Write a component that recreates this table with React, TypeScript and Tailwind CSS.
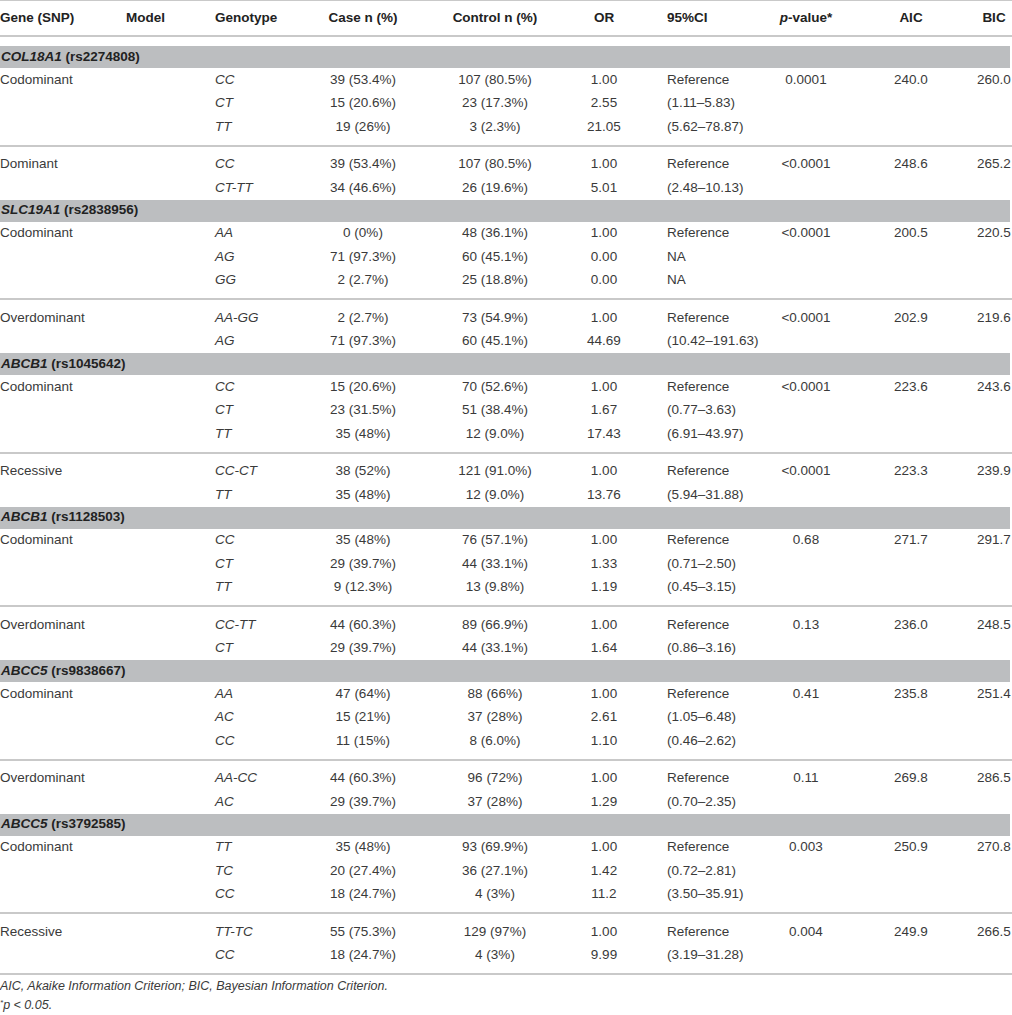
import React from "react";

type Row = {
  geno: string;
  caseN: string;
  ctrlN: string;
  or: string;
  ci: string;
  p?: string;
  aic?: string;
  bic?: string;
};

type Group = { model: string; rows: Row[] };
type Section = { gene: string; snp: string; groups: Group[] };

const sections: Section[] = [
  {
    gene: "COL18A1",
    snp: "(rs2274808)",
    groups: [
      {
        model: "Codominant",
        rows: [
          { geno: "CC", caseN: "39 (53.4%)", ctrlN: "107 (80.5%)", or: "1.00", ci: "Reference", p: "0.0001", aic: "240.0", bic: "260.0" },
          { geno: "CT", caseN: "15 (20.6%)", ctrlN: "23 (17.3%)", or: "2.55", ci: "(1.11–5.83)" },
          { geno: "TT", caseN: "19 (26%)", ctrlN: "3 (2.3%)", or: "21.05", ci: "(5.62–78.87)" },
        ],
      },
      {
        model: "Dominant",
        rows: [
          { geno: "CC", caseN: "39 (53.4%)", ctrlN: "107 (80.5%)", or: "1.00", ci: "Reference", p: "<0.0001", aic: "248.6", bic: "265.2" },
          { geno: "CT-TT", caseN: "34 (46.6%)", ctrlN: "26 (19.6%)", or: "5.01", ci: "(2.48–10.13)" },
        ],
      },
    ],
  },
  {
    gene: "SLC19A1",
    snp: "(rs2838956)",
    groups: [
      {
        model: "Codominant",
        rows: [
          { geno: "AA", caseN: "0 (0%)", ctrlN: "48 (36.1%)", or: "1.00", ci: "Reference", p: "<0.0001", aic: "200.5", bic: "220.5" },
          { geno: "AG", caseN: "71 (97.3%)", ctrlN: "60 (45.1%)", or: "0.00", ci: "NA" },
          { geno: "GG", caseN: "2 (2.7%)", ctrlN: "25 (18.8%)", or: "0.00", ci: "NA" },
        ],
      },
      {
        model: "Overdominant",
        rows: [
          { geno: "AA-GG", caseN: "2 (2.7%)", ctrlN: "73 (54.9%)", or: "1.00", ci: "Reference", p: "<0.0001", aic: "202.9", bic: "219.6" },
          { geno: "AG", caseN: "71 (97.3%)", ctrlN: "60 (45.1%)", or: "44.69", ci: "(10.42–191.63)" },
        ],
      },
    ],
  },
  {
    gene: "ABCB1",
    snp: "(rs1045642)",
    groups: [
      {
        model: "Codominant",
        rows: [
          { geno: "CC", caseN: "15 (20.6%)", ctrlN: "70 (52.6%)", or: "1.00", ci: "Reference", p: "<0.0001", aic: "223.6", bic: "243.6" },
          { geno: "CT", caseN: "23 (31.5%)", ctrlN: "51 (38.4%)", or: "1.67", ci: "(0.77–3.63)" },
          { geno: "TT", caseN: "35 (48%)", ctrlN: "12 (9.0%)", or: "17.43", ci: "(6.91–43.97)" },
        ],
      },
      {
        model: "Recessive",
        rows: [
          { geno: "CC-CT", caseN: "38 (52%)", ctrlN: "121 (91.0%)", or: "1.00", ci: "Reference", p: "<0.0001", aic: "223.3", bic: "239.9" },
          { geno: "TT", caseN: "35 (48%)", ctrlN: "12 (9.0%)", or: "13.76", ci: "(5.94–31.88)" },
        ],
      },
    ],
  },
  {
    gene: "ABCB1",
    snp: "(rs1128503)",
    groups: [
      {
        model: "Codominant",
        rows: [
          { geno: "CC", caseN: "35 (48%)", ctrlN: "76 (57.1%)", or: "1.00", ci: "Reference", p: "0.68", aic: "271.7", bic: "291.7" },
          { geno: "CT", caseN: "29 (39.7%)", ctrlN: "44 (33.1%)", or: "1.33", ci: "(0.71–2.50)" },
          { geno: "TT", caseN: "9 (12.3%)", ctrlN: "13 (9.8%)", or: "1.19", ci: "(0.45–3.15)" },
        ],
      },
      {
        model: "Overdominant",
        rows: [
          { geno: "CC-TT", caseN: "44 (60.3%)", ctrlN: "89 (66.9%)", or: "1.00", ci: "Reference", p: "0.13", aic: "236.0", bic: "248.5" },
          { geno: "CT", caseN: "29 (39.7%)", ctrlN: "44 (33.1%)", or: "1.64", ci: "(0.86–3.16)" },
        ],
      },
    ],
  },
  {
    gene: "ABCC5",
    snp: "(rs9838667)",
    groups: [
      {
        model: "Codominant",
        rows: [
          { geno: "AA", caseN: "47 (64%)", ctrlN: "88 (66%)", or: "1.00", ci: "Reference", p: "0.41", aic: "235.8", bic: "251.4" },
          { geno: "AC", caseN: "15 (21%)", ctrlN: "37 (28%)", or: "2.61", ci: "(1.05–6.48)" },
          { geno: "CC", caseN: "11 (15%)", ctrlN: "8 (6.0%)", or: "1.10", ci: "(0.46–2.62)" },
        ],
      },
      {
        model: "Overdominant",
        rows: [
          { geno: "AA-CC", caseN: "44 (60.3%)", ctrlN: "96 (72%)", or: "1.00", ci: "Reference", p: "0.11", aic: "269.8", bic: "286.5" },
          { geno: "AC", caseN: "29 (39.7%)", ctrlN: "37 (28%)", or: "1.29", ci: "(0.70–2.35)" },
        ],
      },
    ],
  },
  {
    gene: "ABCC5",
    snp: "(rs3792585)",
    groups: [
      {
        model: "Codominant",
        rows: [
          { geno: "TT", caseN: "35 (48%)", ctrlN: "93 (69.9%)", or: "1.00", ci: "Reference", p: "0.003", aic: "250.9", bic: "270.8" },
          { geno: "TC", caseN: "20 (27.4%)", ctrlN: "36 (27.1%)", or: "1.42", ci: "(0.72–2.81)" },
          { geno: "CC", caseN: "18 (24.7%)", ctrlN: "4 (3%)", or: "11.2", ci: "(3.50–35.91)" },
        ],
      },
      {
        model: "Recessive",
        rows: [
          { geno: "TT-TC", caseN: "55 (75.3%)", ctrlN: "129 (97%)", or: "1.00", ci: "Reference", p: "0.004", aic: "249.9", bic: "266.5" },
          { geno: "CC", caseN: "18 (24.7%)", ctrlN: "4 (3%)", or: "9.99", ci: "(3.19–31.28)" },
        ],
      },
    ],
  },
];

function DataRow({ model, row }: { model?: string; row: Row }) {
  return (
    <div className="flex h-[23.5px] items-center whitespace-nowrap">
      <div className="w-[215px]">{model}</div>
      <div className="w-[103px] italic">{row.geno}</div>
      <div className="w-[90px] text-center">{row.caseN}</div>
      <div className="w-[174px] text-center">{row.ctrlN}</div>
      <div className="w-[44px] text-center">{row.or}</div>
      <div className="w-[140px] pl-[41px]">{row.ci}</div>
      <div className="w-[80px] text-center">{row.p}</div>
      <div className="w-[130px] text-center">{row.aic}</div>
      <div className="w-[36px] text-center">{row.bic}</div>
    </div>
  );
}

export default function App() {
  return (
    <div
      className="w-[1012px] h-[1015px] overflow-hidden bg-white text-[13.5px] text-[#3a3a3a]"
      style={{ fontFamily: '"Liberation Sans", Arial, sans-serif' }}
    >
      {/* Header */}
      <div className="border-t border-[#c9c9c9]">
        <div className="flex h-[34px] items-center whitespace-nowrap font-bold text-[#222]">
          <div className="w-[126px]">Gene (SNP)</div>
          <div className="w-[89px]">Model</div>
          <div className="w-[103px]">Genotype</div>
          <div className="w-[90px] text-center">Case n (%)</div>
          <div className="w-[174px] text-center">Control n (%)</div>
          <div className="w-[44px] text-center">OR</div>
          <div className="w-[140px] pl-[41px]">95%CI</div>
          <div className="w-[80px] text-center">
            <span className="italic">p</span>-value*
          </div>
          <div className="w-[130px] text-center">AIC</div>
          <div className="w-[36px] text-center">BIC</div>
        </div>
        <div className="h-[2px] bg-[#c9c9c9]" />
      </div>

      <div className="mt-[9px]">
        {sections.map((s, si) => (
          <div key={si}>
            <div className="flex h-[22px] w-[1010px] items-center bg-[#bcbec0] pl-[1px] font-bold text-[#222]">
              <span className="italic">{s.gene}</span>&nbsp;{s.snp}
            </div>
            {s.groups.map((g, gi) => {
              const last = gi === s.groups.length - 1;
              const isEnd = si === sections.length - 1 && last;
              return (
                <div key={gi} className={gi > 0 ? "pt-[6px]" : ""}>
                  {g.rows.map((r, ri) => (
                    <DataRow key={ri} model={ri === 0 ? g.model : undefined} row={r} />
                  ))}
                  {!last && <div className="mt-[6px] h-[2px] bg-[#c9c9c9]" />}
                  {isEnd && <div className="mt-[6px] h-[2px] bg-[#c9c9c9]" />}
                </div>
              );
            })}
          </div>
        ))}
      </div>

      {/* Footnotes */}
      <div className="pt-[2px] text-[12.5px] italic leading-[19px] text-[#3a3a3a]">
        <div>AIC, Akaike Information Criterion; BIC, Bayesian Information Criterion.</div>
        <div>
          <sup className="text-[8px]">*</sup>p &lt; 0.05.
        </div>
      </div>
    </div>
  );
}
